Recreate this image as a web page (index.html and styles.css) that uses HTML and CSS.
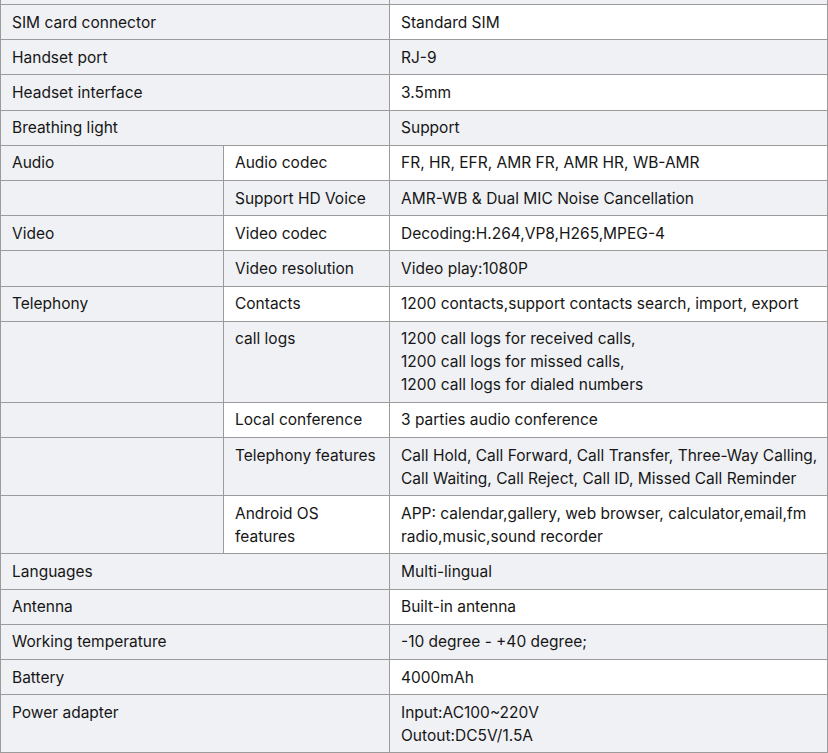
FILE: index.html
```html
<!DOCTYPE html>
<html>
<head>
<meta charset="utf-8">
<link rel="stylesheet" href="styles.css">
</head>
<body>
<div class="wrap">
<table class="spec">
<colgroup><col class="c1"><col class="c2"><col class="c3"></colgroup>
<tbody>
<tr class="alt"><td class="k" colspan="2">&nbsp;</td><td class="v">&nbsp;</td></tr>
<tr><td class="k" colspan="2">SIM card connector</td><td class="v">Standard SIM</td></tr>
<tr class="alt"><td class="k" colspan="2">Handset port</td><td class="v">RJ-9</td></tr>
<tr><td class="k" colspan="2">Headset interface</td><td class="v">3.5mm</td></tr>
<tr class="alt"><td class="k" colspan="2">Breathing light</td><td class="v">Support</td></tr>
<tr><td class="k">Audio</td><td>Audio codec</td><td class="v">FR, HR, EFR, AMR FR, AMR HR, WB-AMR</td></tr>
<tr class="alt"><td class="k"></td><td>Support HD Voice</td><td class="v">AMR-WB &amp; Dual MIC Noise Cancellation</td></tr>
<tr><td class="k">Video</td><td>Video codec</td><td class="v">Decoding:H.264,VP8,H265,MPEG-4</td></tr>
<tr class="alt"><td class="k"></td><td>Video resolution</td><td class="v">Video play:1080P</td></tr>
<tr><td class="k">Telephony</td><td>Contacts</td><td class="v">1200 contacts,support contacts search, import, export</td></tr>
<tr class="alt"><td class="k"></td><td>call logs</td><td class="v">1200 call logs for received calls,<br>1200 call logs for missed calls,<br>1200 call logs for dialed numbers</td></tr>
<tr><td class="k"></td><td>Local conference</td><td class="v">3 parties audio conference</td></tr>
<tr class="alt"><td class="k"></td><td>Telephony features</td><td class="v">Call Hold, Call Forward, Call Transfer, Three-Way Calling,<br>Call Waiting, Call Reject, Call ID, Missed Call Reminder</td></tr>
<tr><td class="k"></td><td>Android OS<br>features</td><td class="v">APP: calendar,gallery, web browser, calculator,email,fm<br>radio,music,sound recorder</td></tr>
<tr class="alt"><td class="k" colspan="2">Languages</td><td class="v">Multi-lingual</td></tr>
<tr><td class="k" colspan="2">Antenna</td><td class="v">Built-in antenna</td></tr>
<tr class="alt"><td class="k" colspan="2">Working temperature</td><td class="v">-10 degree - +40 degree;</td></tr>
<tr><td class="k" colspan="2">Battery</td><td class="v">4000mAh</td></tr>
<tr class="alt"><td class="k" colspan="2">Power adapter</td><td class="v">Input:AC100~220V<br>Outout:DC5V/1.5A</td></tr>
<tr><td class="k" colspan="2">&nbsp;</td><td class="v">&nbsp;</td></tr>
</tbody>
</table>
</div>
</body>
</html>
```
FILE: styles.css
```css
html, body {
  margin: 0;
  padding: 0;
  background: #ffffff;
}
.wrap {
  height: 753px;
  overflow: hidden;
}
.spec {
  margin-top: -31.2px;
  width: 827px;
  table-layout: fixed;
  border-collapse: collapse;
  font-family: Inter, "Noto Sans", sans-serif;
  font-size: 15.5px;
  line-height: 23px;
  color: #161616;
}
.c1 { width: 223px; }
.c2 { width: 166px; }
.c3 { width: 438px; }
.spec td {
  border: 1px solid #9b9b9b;
  padding: 5.6px 11px;
  vertical-align: top;
  background: #ffffff;
}
.spec td.v {
  padding-right: 2px;
  white-space: nowrap;
}
.spec tr.alt td {
  background: #f0f1f5;
}
.spec td.k {
  background: #f0f1f5;
}
```
